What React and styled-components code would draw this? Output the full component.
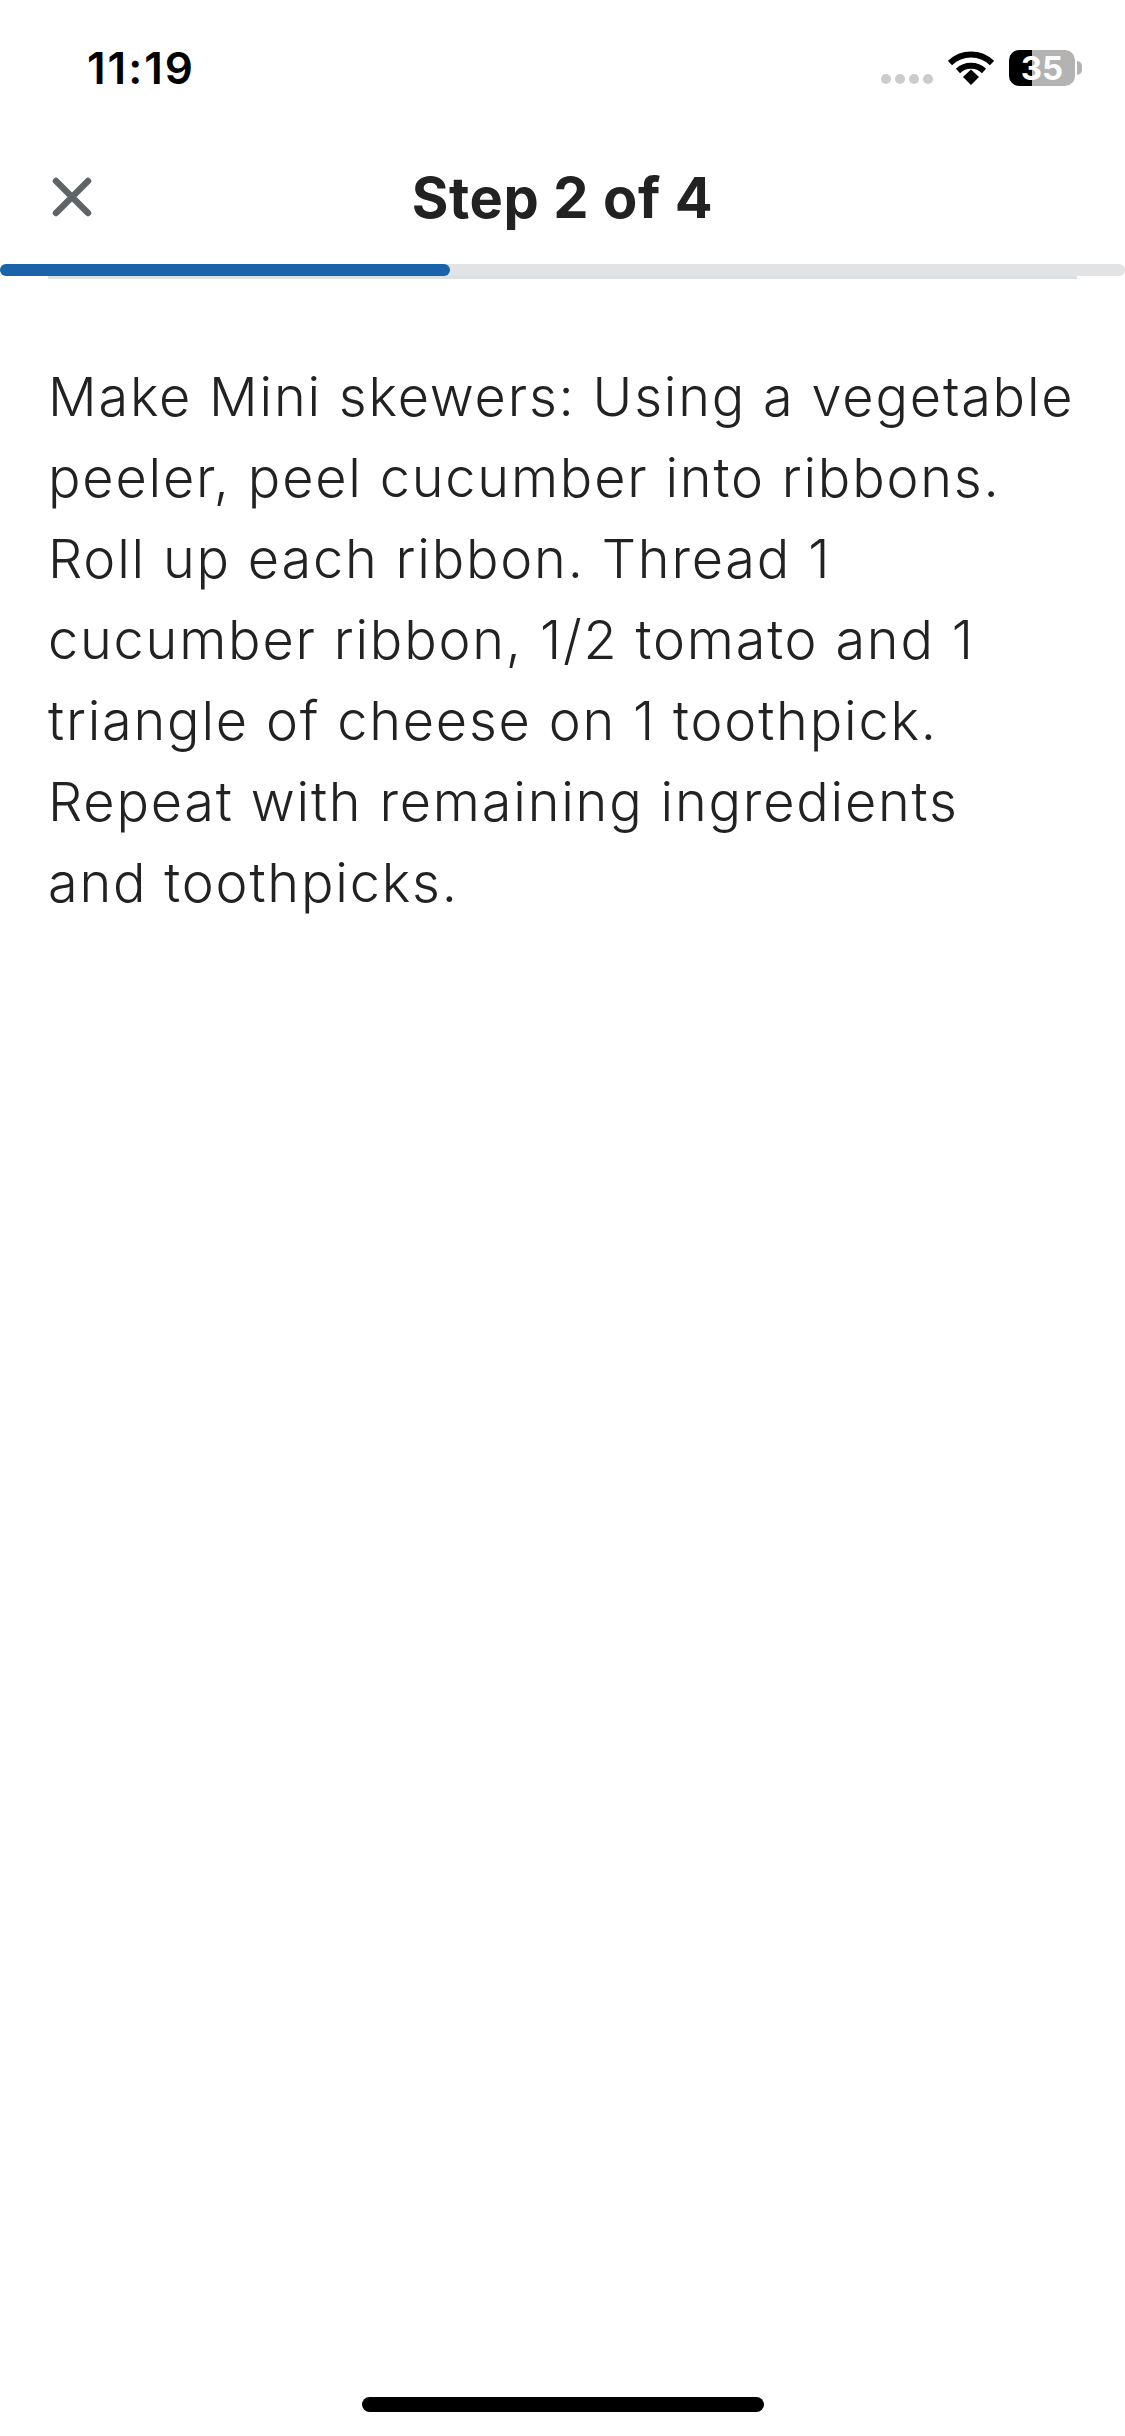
import React from 'react';
import styled, { createGlobalStyle } from 'styled-components';

const GlobalStyle = createGlobalStyle`
  html, body {
    margin: 0;
    padding: 0;
    background: #fff;
  }
`;

const Screen = styled.div`
  width: 1125px;
  height: 2436px;
  display: flex;
  flex-direction: column;
  background: #fff;
  overflow: hidden;
  font-family: Inter, "Liberation Sans", sans-serif;
`;

const StatusBar = styled.div`
  height: 136px;
  box-sizing: border-box;
  padding: 0 50px 0 87px;
  display: flex;
  align-items: center;
  justify-content: space-between;
`;

const Clock = styled.span`
  font-size: 44px;
  font-weight: 600;
  letter-spacing: 2px;
  color: #000;
`;

const StatusIcons = styled.div`
  display: flex;
  align-items: center;
  gap: 15px;
`;

const Signal = styled.div`
  display: flex;
  gap: 4px;
  margin-top: 22px;
`;

const SignalDot = styled.span`
  width: 10px;
  height: 10px;
  border-radius: 50%;
  background: #ccc;
`;

const Battery = styled.div`
  position: relative;
  width: 66px;
  height: 36px;
  border-radius: 10px;
  display: flex;
  align-items: center;
  justify-content: center;
  font-size: 33px;
  font-weight: 700;
  color: #fff;
  background: linear-gradient(to right, #000 35%, #b3b3b3 35%);

  &::after {
    content: '';
    position: absolute;
    right: -7px;
    top: 11px;
    width: 5px;
    height: 14px;
    border-radius: 0 6px 6px 0;
    background: #b3b3b3;
  }
`;

const Header = styled.div`
  position: relative;
  height: 128px;
  display: flex;
  align-items: center;
  justify-content: center;
`;

const CloseButton = styled.button`
  position: absolute;
  left: 48px;
  top: 37px;
  padding: 0;
  border: none;
  background: none;
  display: flex;
`;

const Title = styled.h1`
  margin: 0 0 5px;
  font-size: 56px;
  font-weight: 700;
  letter-spacing: 0.6px;
  color: #222;
`;

const Track = styled.div`
  height: 12px;
  border-radius: 6px;
  background: #e2e3e4;
`;

const Fill = styled.div`
  height: 100%;
  border-radius: 6px;
  background: #1a62aa;
`;

const Rule = styled.div`
  height: 3px;
  margin: 0 48px;
  background: #dde0e3;
`;

const Body = styled.p`
  flex: 1;
  margin: 0;
  padding: 77px 0 0 48px;
  font-size: 54px;
  line-height: 81px;
  font-weight: 350;
  letter-spacing: 1.8px;
  white-space: nowrap;
  color: #222;
`;

const HomeBar = styled.div`
  width: 402px;
  height: 15px;
  margin: 0 auto 24px;
  border-radius: 8px;
  background: #000;
`;

const App = () => {
  return (
    <Screen>
      <GlobalStyle />
      <StatusBar>
        <Clock>11:19</Clock>
        <StatusIcons>
          <Signal>
            <SignalDot />
            <SignalDot />
            <SignalDot />
            <SignalDot />
          </Signal>
          <svg width="46" height="34" viewBox="0 0 46 34">
            <path d="M2 12 A30 30 0 0 1 44 12" fill="none" stroke="#000" strokeWidth="6" />
            <path d="M10 20 A19 19 0 0 1 36 20" fill="none" stroke="#000" strokeWidth="6" />
            <path d="M15 26 L23 18.500 L31 26 L23 34 Z" fill="#000" />
          </svg>
          <Battery>35</Battery>
        </StatusIcons>
      </StatusBar>
      <Header>
        <CloseButton>
          <svg width="48" height="48" viewBox="0 0 48 48">
            <path d="M8 8 L40 40 M40 8 L8 40" stroke="#5f6566" strokeWidth="6.500" strokeLinecap="round" />
          </svg>
        </CloseButton>
        <Title>Step 2 of 4</Title>
      </Header>
      <Track>
        <Fill style={{ width: `${(450 / 1125) * 100}%` }} />
      </Track>
      <Rule />
      <Body>
        Make Mini skewers: Using a vegetable<br />
        peeler, peel cucumber into ribbons.<br />
        Roll up each ribbon. Thread 1<br />
        cucumber ribbon, 1/2 tomato and 1<br />
        triangle of cheese on 1 toothpick.<br />
        Repeat with remaining ingredients<br />
        and toothpicks.
      </Body>
      <HomeBar />
    </Screen>
  );
};

export default App;
